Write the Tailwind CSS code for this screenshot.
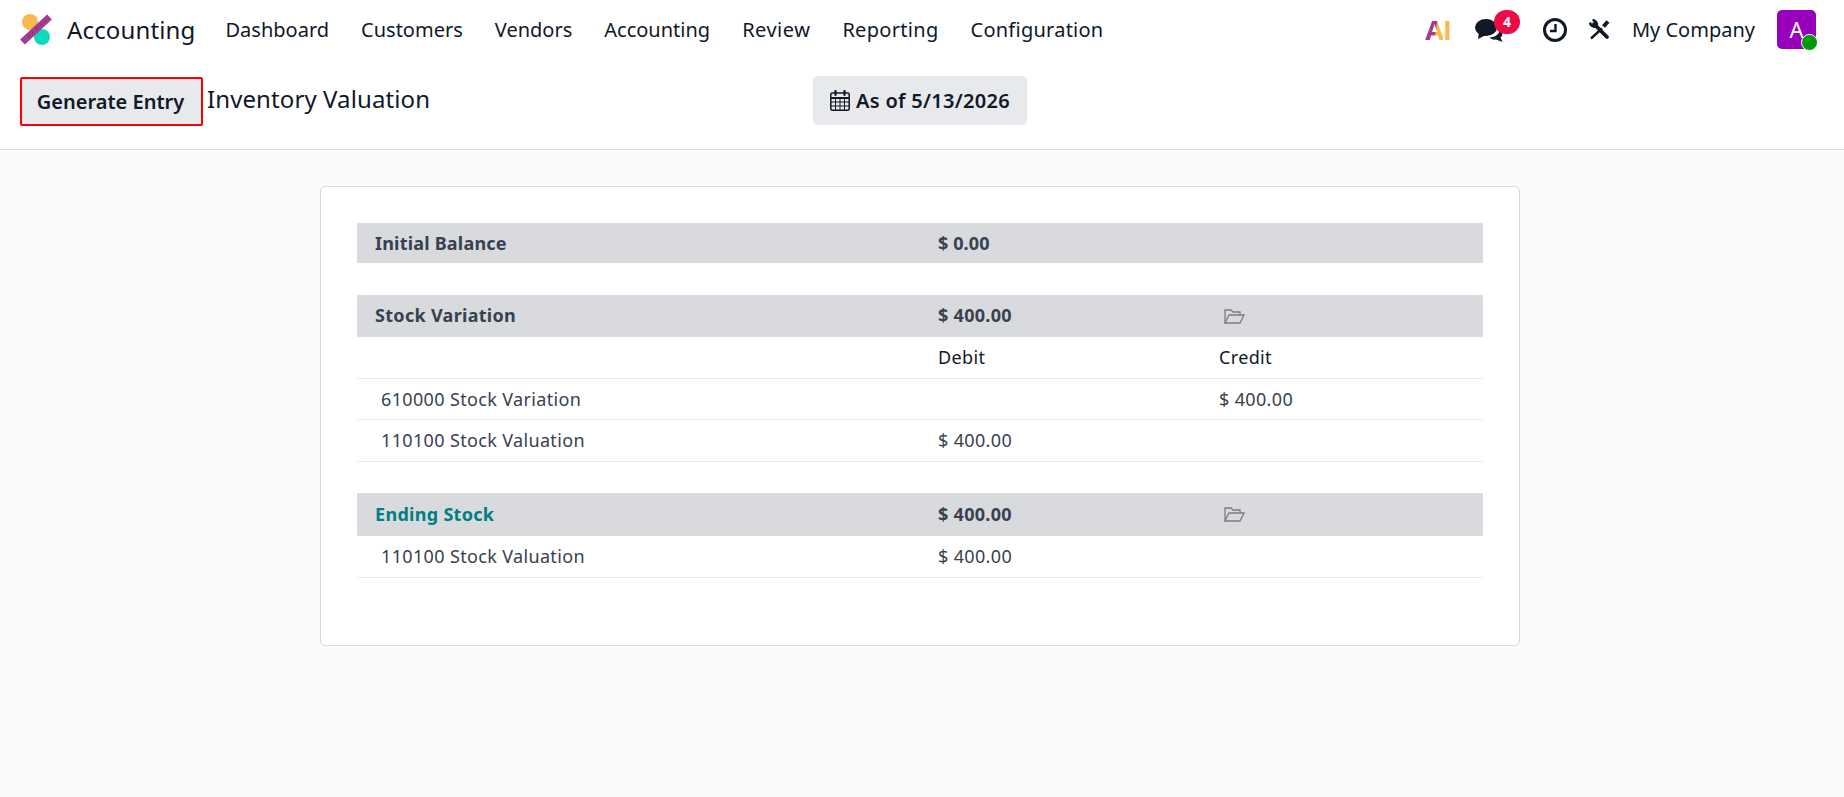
<!DOCTYPE html>
<html lang="en">
<head>
    <meta charset="UTF-8">
    <meta name="viewport" content="width=device-width, initial-scale=1.0">
    <title>Inventory Valuation</title>
    <script src="https://cdn.jsdelivr.net/npm/@tailwindcss/browser@4"></script>
</head>
<body class="bg-[#f9fafb] font-['Noto_Sans',sans-serif] text-[#111827] overflow-hidden">
    <div class="h-[797px] flex flex-col">
        <!-- Top nav -->
        <nav class="h-[59px] bg-white flex items-center pl-[19px] pr-[28px]">
            <svg class="w-[34px] h-[32px] mr-[14px] mt-[-1px]" viewBox="0 0 34 32">
                <circle cx="11" cy="9" r="8" fill="#f9b94f"/>
                <circle cx="23" cy="24" r="8" fill="#0bdbbd"/>
                <path d="M3.5 29 L30.5 4" stroke="#a63b8e" stroke-width="7"/>
                <path d="M9 24 L25 9" stroke="#4a2048" stroke-width="1" stroke-dasharray="1 5"/>
            </svg>
            <span class="text-[24px] tracking-[0.15px] mr-[30px]">Accounting</span>
            <div class="flex gap-[32px] text-[20px]">
                <span>Dashboard</span>
                <span>Customers</span>
                <span>Vendors</span>
                <span>Accounting</span>
                <span class="tracking-[0.5px]">Review</span>
                <span class="tracking-[0.3px]">Reporting</span>
                <span class="tracking-[0.25px]">Configuration</span>
            </div>
            <div class="ml-auto flex items-center">
                <span class="text-[27px] leading-none font-bold tracking-[-1px] mr-[24px] font-['Open_Sans',sans-serif] flex">
                    <span class="bg-[linear-gradient(100deg,#a63b8e_55%,#f9b94f_62%)] bg-clip-text text-transparent">A</span><span class="text-[#f9b94f]">I</span>
                </span>
                <div class="relative w-[45px] h-[26px] mr-[23px]">
                    <svg class="w-[28px] h-[23px] mt-[2px]" viewBox="0 0 28 23" fill="#111827">
                        <ellipse cx="11" cy="8.5" rx="11" ry="8.5"/>
                        <path d="M4 13 L3 20 L11 16 Z"/>
                        <path d="M14 18.5 C19 18.5 24 16 25 11 C28 13 28 17 25.5 18.5 L27.5 23 L21 20.5 C18.5 21 16 20 14 18.5 Z"/>
                    </svg>
                    <span class="absolute left-[19px] top-[-7px] w-[26px] h-[24px] rounded-full bg-[#ee0a46] text-white text-[14px] font-bold flex items-center justify-center">4</span>
                </div>
                <svg class="w-[24px] h-[24px] mr-[22px]" viewBox="0 0 24 24" fill="none" stroke="#111827">
                    <circle cx="12" cy="12" r="10.5" stroke-width="3"/>
                    <path d="M12.5 6 V13 H7" stroke-width="2.4"/>
                </svg>
                <svg class="w-[21px] h-[21px] mr-[22px]" viewBox="0 0 21 21" fill="none" stroke="#111827">
                    <path d="M2 19.5 L13 9.5" stroke-width="2.4"/>
                    <path d="M14.5 7.5 L19 2.5" stroke-width="4"/>
                    <path d="M5 5 L18 18" stroke-width="3.8" stroke-linecap="round"/>
                    <path d="M1 3.5 A5 5 0 0 0 7.5 7.5 M3.5 1 A5 5 0 0 1 7.8 7" stroke-width="2.6"/>
                </svg>
                <span class="text-[20px] mr-[22px]">My Company</span>
                <div class="relative w-[39px] h-[39px] rounded-[5px] bg-[#9900bb] text-white text-[22px] flex items-center justify-center">
                    A
                    <span class="absolute left-[24px] top-[24px] w-[17px] h-[17px] rounded-full bg-[#00990a] border-[1.5px] border-white"></span>
                </div>
            </div>
        </nav>

        <!-- Control panel -->
        <div class="h-[91px] bg-white border-b border-[#d8dadd] relative flex items-start pl-[20px] pt-[18px]">
            <button class="w-[183px] h-[49px] bg-[#e7e9ed] border-2 border-[#ff0000] rounded-[2px] text-[20px] font-semibold pr-[2px]">Generate Entry</button>
            <span class="ml-[4px] text-[24px] leading-[43px] tracking-[0.1px]">Inventory Valuation</span>
            <button class="absolute left-[813px] top-[17px] w-[214px] h-[49px] bg-[#e7e9ed] rounded-[5px] flex items-center justify-center gap-[6px] text-[20px] font-semibold tracking-[0.3px]">
                <svg class="w-[20px] h-[21px]" viewBox="0 0 20 21" fill="none" stroke="#111827" stroke-width="1.2">
                    <rect x="0.8" y="3" width="18.4" height="17.2" rx="1.5" stroke-width="1.5"/>
                    <path d="M1 8 H19" stroke-width="2"/>
                    <path d="M1 12 H19 M1 16 H19 M5.5 8 V20 M10 8 V20 M14.5 8 V20" stroke-width="1"/>
                    <path d="M5.5 1 V5 M14.5 1 V5" stroke-width="2.2" stroke-linecap="round"/>
                </svg>
                As of 5/13/2026
            </button>
        </div>

        <!-- Report card -->
        <main class="pt-[36px] pl-[320px]">
            <div class="w-[1200px] h-[460px] bg-white border border-[#d8dadd] rounded-[5px] pt-[36px] px-[36px] text-[#374151] text-[18px] tracking-[0.35px]">
                <div class="grid grid-cols-[563px_281px_1fr] h-[40px] items-center bg-[#d8dadd] font-bold tracking-[0.1px]">
                    <span class="pl-[18px] tracking-[0.2px]">Initial Balance</span>
                    <span class="pl-[18px]">$ 0.00</span>
                    <span></span>
                </div>

                <div class="grid grid-cols-[563px_281px_1fr] h-[42px] mt-[32px] pb-[1px] items-center bg-[#d8dadd] font-bold tracking-[0.3px]">
                    <span class="pl-[18px]">Stock Variation</span>
                    <span class="pl-[18px]">$ 400.00</span>
                    <span class="pl-[23px] pt-[1px]">
                        <svg class="w-[21px] h-[15px]" viewBox="0 0 21 15" fill="none" stroke="#7b7d84" stroke-width="1.3">
                            <path d="M1 14 V1 H7 L9 3 H16 V6"/>
                            <path d="M1 14 H16 L20 6 H5 Z"/>
                        </svg>
                    </span>
                </div>
                <div class="grid grid-cols-[563px_281px_1fr] h-[42px] items-center border-b border-[#e7e9ed] text-[#111827]">
                    <span></span>
                    <span class="pl-[18px]">Debit</span>
                    <span class="pl-[18px]">Credit</span>
                </div>
                <div class="grid grid-cols-[563px_281px_1fr] h-[41px] items-center border-b border-[#e7e9ed]">
                    <span class="pl-[24px]">610000 Stock Variation</span>
                    <span></span>
                    <span class="pl-[18px]">$ 400.00</span>
                </div>
                <div class="grid grid-cols-[563px_281px_1fr] h-[42px] items-center border-b border-[#e7e9ed]">
                    <span class="pl-[24px]">110100 Stock Valuation</span>
                    <span class="pl-[18px]">$ 400.00</span>
                    <span></span>
                </div>

                <div class="grid grid-cols-[563px_281px_1fr] h-[43px] mt-[31px] items-center bg-[#d8dadd] font-bold tracking-[0.3px]">
                    <span class="pl-[18px] text-[#017e84]">Ending Stock</span>
                    <span class="pl-[18px]">$ 400.00</span>
                    <span class="pl-[23px]">
                        <svg class="w-[21px] h-[15px]" viewBox="0 0 21 15" fill="none" stroke="#7b7d84" stroke-width="1.3">
                            <path d="M1 14 V1 H7 L9 3 H16 V6"/>
                            <path d="M1 14 H16 L20 6 H5 Z"/>
                        </svg>
                    </span>
                </div>
                <div class="grid grid-cols-[563px_281px_1fr] h-[42px] items-center border-b border-[#e7e9ed]">
                    <span class="pl-[24px]">110100 Stock Valuation</span>
                    <span class="pl-[18px]">$ 400.00</span>
                    <span></span>
                </div>
            </div>
        </main>
    </div>
</body>
</html>
